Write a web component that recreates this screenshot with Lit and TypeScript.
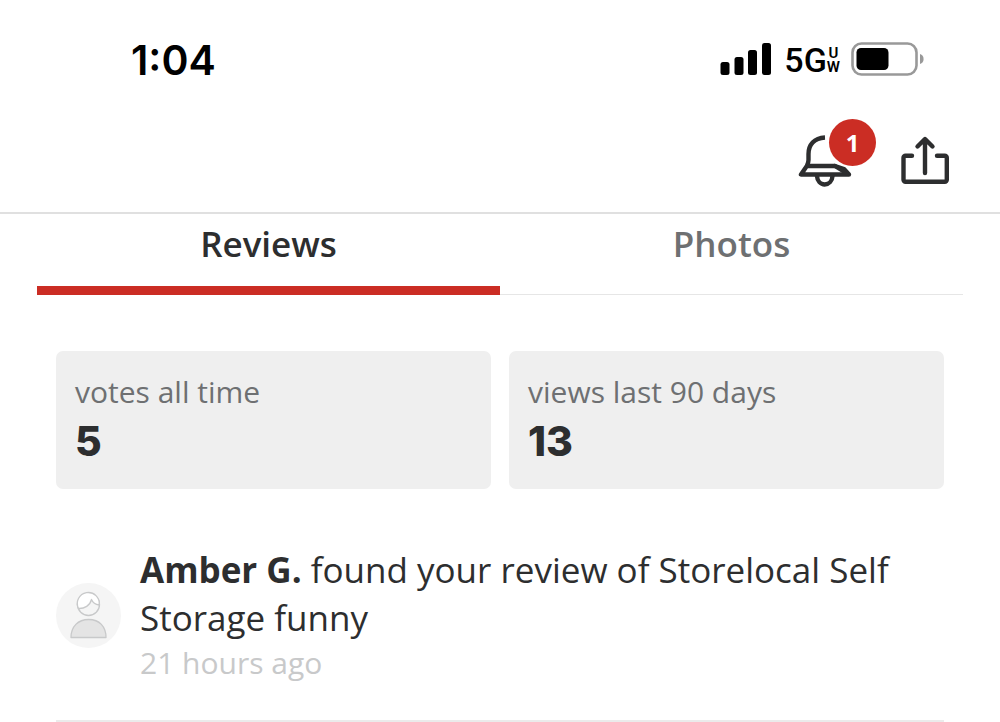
import { LitElement, html, css } from "lit";
import { customElement, property, state } from "lit/decorators.js";

@customElement("status-bar")
class StatusBar extends LitElement {
  static styles = css`
    :host {
      display: flex;
      justify-content: space-between;
      align-items: center;
      height: 120px;
      padding: 0 76px 0 131px;
      box-sizing: border-box;
      color: #000;
      font-family: Inter, sans-serif;
    }
    .time {
      font-size: 41px;
      line-height: 48px;
      font-weight: 600;
    }
    .signals {
      display: flex;
      align-items: center;
      padding-bottom: 2px;
    }
    .bars {
      margin-right: 12px;
    }
    .network {
      display: flex;
      align-items: center;
      margin-right: 11px;
      padding-top: 2px;
      font-family: Roboto, sans-serif;
      font-weight: 500;
    }
    .generation {
      font-size: 34px;
      line-height: 40px;
    }
    .band {
      display: grid;
      font-size: 15px;
      line-height: 14px;
      font-weight: 600;
      text-align: center;
    }
    svg {
      display: block;
    }
  `;

  render() {
    return html`
      <div class="time">1:04</div>
      <div class="signals">
        <svg class="bars" width="52" height="34" viewBox="0 0 52 34" aria-hidden="true">
          <rect x="0.5" y="20" width="9" height="13" rx="2.5" />
          <rect x="14.5" y="15" width="9" height="18" rx="2.5" />
          <rect x="28" y="8" width="9" height="25" rx="2.5" />
          <rect x="42" y="1" width="9" height="32" rx="2.5" />
        </svg>
        <div class="network">
          <span class="generation">5G</span>
          <span class="band"><span>U</span><span>W</span></span>
        </div>
        <svg width="73" height="34" viewBox="0 0 73 34" aria-hidden="true">
          <rect x="1.5" y="1.5" width="64" height="31" rx="9" fill="none" stroke="#999" stroke-width="2.6" />
          <rect x="5.5" y="6" width="32" height="22" rx="4.5" />
          <path d="M69 12c2.300 .6 3.600 2.400 3.600 5s-1.300 4.400-3.600 5z" fill="#999" />
        </svg>
      </div>
    `;
  }
}

@customElement("app-header")
class AppHeader extends LitElement {
  @property({ type: Number }) notifications = 0;

  static styles = css`
    :host {
      display: flex;
      justify-content: flex-end;
      gap: 46px;
      height: 94px;
      padding: 12px 50px 0 48px;
      box-sizing: border-box;
      border-bottom: 2px solid #e0e0e0;
    }
    button {
      position: relative;
      width: 56px;
      height: 60px;
      padding: 0;
      border: 0;
      background: none;
      color: #2d2e2f;
    }
    svg {
      display: block;
      fill: none;
      stroke: currentColor;
      stroke-width: 4.4;
      stroke-linecap: round;
      stroke-linejoin: round;
    }
    .badge {
      position: absolute;
      top: -13px;
      right: -22px;
      width: 47px;
      height: 47px;
      border-radius: 50%;
      background: #cb2d24;
      color: #fff;
      font-family: "Open Sans", sans-serif;
      font-size: 24px;
      line-height: 47px;
      font-weight: 700;
      text-align: center;
    }
    .share {
      width: 50px;
    }
  `;

  render() {
    return html`
      <button type="button" aria-label="Notifications">
        <svg width="56" height="60" viewBox="0 0 56 60">
          <path stroke-linecap="butt" d="M27 5.500C16 6 10.500 13 10.500 22v6c0 2.500-.8 4.300-1.700 6L3 42.500h48L46 37 37 34H9" />
          <path d="M37 34l12 7.500" />
          <path d="M19 44c.3 5 3.500 8.500 7.700 8.500s7.500-3.500 7.800-8.500" />
        </svg>
        <span class="badge">${this.notifications}</span>
      </button>
      <button type="button" class="share" aria-label="Share">
        <svg width="50" height="60" viewBox="0 0 50 60">
          <path d="M12 23.700H5.500a2 2 0 0 0-2 2v22a2 2 0 0 0 2 2h39.300a2 2 0 0 0 2-2v-22a2 2 0 0 0-2-2H37" />
          <path d="M25 41V7.500M17.500 14.500L25 7l7.500 7.500" />
        </svg>
      </button>
    `;
  }
}

@customElement("tab-strip")
class TabStrip extends LitElement {
  @state() private active = 0;
  private tabs = ["Reviews", "Photos"];

  static styles = css`
    :host {
      display: block;
      padding: 0 37px;
    }
    .tabs {
      display: grid;
      grid-template-columns: 1fr 1fr;
    }
    button {
      height: 81px;
      padding: 0 0 22px;
      box-sizing: border-box;
      border: 0;
      background: none;
      box-shadow: inset 0 -1px #e6e6e6;
      color: #6e7072;
      font-family: "Open Sans", sans-serif;
      font-size: 35px;
      line-height: 48px;
      font-weight: 600;
      display: flex;
      justify-content: center;
      align-items: center;
    }
    .active {
      box-shadow: inset 0 -9px #cb2d24;
      color: #2d2e2f;
    }
  `;

  render() {
    return html`
      <div class="tabs" role="tablist">
        ${this.tabs.map(
          (label, i) => html`<button
            type="button"
            role="tab"
            class=${i === this.active ? "active" : ""}
            aria-selected=${i === this.active}
            @click=${() => (this.active = i)}
          >${label}</button>`
        )}
      </div>
    `;
  }
}

@customElement("stat-card")
class StatCard extends LitElement {
  @property() label = "";
  @property() value = "";

  static styles = css`
    :host {
      display: block;
      padding: 20px 19px 22px;
      border-radius: 7px;
      background: #efefef;
    }
    .label {
      color: #6e7072;
      font-size: 30px;
      line-height: 42px;
    }
    .value {
      padding-top: 2px;
      color: #2d2e2f;
      font-family: Inter, sans-serif;
      font-size: 41px;
      line-height: 52px;
      font-weight: 800;
    }
  `;

  render() {
    return html`
      <div class="label">${this.label}</div>
      <div class="value">${this.value}</div>
    `;
  }
}

@customElement("activity-item")
class ActivityItem extends LitElement {
  @property() name = "";
  @property() action = "";
  @property() when = "";

  static styles = css`
    :host {
      display: flex;
      align-items: center;
      gap: 19px;
      padding-bottom: 36px;
      border-bottom: 2px solid #ebebeb;
      color: #2d2e2f;
    }
    .avatar {
      flex: none;
      display: block;
    }
    .message {
      margin: 0;
      font-size: 35px;
      line-height: 48px;
    }
    .name {
      font-weight: 700;
    }
    .when {
      display: block;
      color: #c8c9ca;
      font-size: 30px;
      line-height: 42px;
    }
  `;

  render() {
    return html`
      <svg class="avatar" width="65" height="65" viewBox="0 0 65 65" aria-hidden="true">
        <circle cx="32.500" cy="32.500" r="32.500" fill="#f5f5f5" />
        <g stroke="#c8c9ca" stroke-width="1.300" stroke-linejoin="round">
          <circle cx="32.500" cy="21.500" r="11" fill="#f5f5f5" />
          <path d="M22.500 25.500c6 .3 11.500-3 13-9 1.200 3 4 5 7.700 5.500A11 11 0 1 0 22.500 25.500z" fill="#fff" />
          <path d="M15 54.500c0-11 7-18 17.700-18s17.300 7 17.300 18z" fill="#e4e4e4" />
        </g>
      </svg>
      <div>
        <p class="message"><span class="name">${this.name}</span> ${this.action}</p>
        <time class="when">${this.when}</time>
      </div>
    `;
  }
}

@customElement("app-root")
class AppRoot extends LitElement {
  static styles = css`
    :host {
      display: block;
      min-height: 100vh;
      background: #fff;
      font-family: "Open Sans", sans-serif;
    }
    .content {
      padding: 56px 56px 0;
    }
    .stats {
      display: grid;
      grid-template-columns: 1fr 1fr;
      gap: 18px;
      margin-bottom: 57px;
    }
  `;

  render() {
    return html`
      <status-bar></status-bar>
      <app-header notifications="1"></app-header>
      <tab-strip></tab-strip>
      <main class="content">
        <div class="stats">
          <stat-card label="votes all time" value="5"></stat-card>
          <stat-card label="views last 90 days" value="13"></stat-card>
        </div>
        <activity-item
          name="Amber G."
          action="found your review of Storelocal Self Storage funny"
          when="21 hours ago"
        ></activity-item>
      </main>
    `;
  }
}
